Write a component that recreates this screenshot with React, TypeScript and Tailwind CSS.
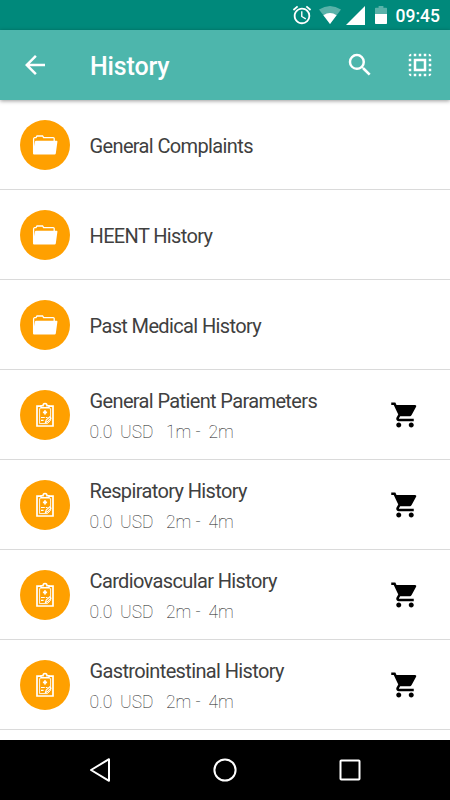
import type { ReactNode } from "react";
import clsx from "clsx";

type Item = {
  title: string;
  price?: string;
  from?: string;
  to?: string;
};

const ITEMS: Item[] = [
  { title: "General Complaints" },
  { title: "HEENT History" },
  { title: "Past Medical History" },
  { title: "General Patient Parameters", price: "0.0", from: "1m", to: "2m" },
  { title: "Respiratory History", price: "0.0", from: "2m", to: "4m" },
  { title: "Cardiovascular History", price: "0.0", from: "2m", to: "4m" },
  { title: "Gastrointestinal History", price: "0.0", from: "2m", to: "4m" },
];

function MdIcon({ d, className = "size-[30px]" }: { d: string; className?: string }) {
  return (
    <svg viewBox="0 0 24 24" className={clsx("shrink-0", className)} fill="currentColor">
      <path d={d} />
    </svg>
  );
}

const ALARM =
  "M22 5.72l-4.6-3.86-1.29 1.53 4.6 3.86L22 5.72zM7.88 3.39L6.6 1.86 2 5.71l1.29 1.53 4.59-3.85zM12.5 8H11v6l4.75 2.85.75-1.23-4-2.37V8zM12 4c-4.97 0-9 4.03-9 9s4.02 9 9 9a9 9 0 0 0 0-18zm0 16c-3.87 0-7-3.13-7-7s3.13-7 7-7 7 3.13 7 7-3.13 7-7 7z";
const BACK = "M20 11H7.83l5.59-5.59L12 4l-8 8 8 8 1.41-1.41L7.83 13H20v-2z";
const SEARCH =
  "M15.5 14h-.79l-.28-.27A6.471 6.471 0 0 0 16 9.5 6.5 6.5 0 1 0 9.5 16c1.61 0 3.09-.59 4.23-1.57l.27.28v.79l5 4.99L20.49 19l-4.99-5zm-6 0C7.01 14 5 11.99 5 9.5S7.01 5 9.5 5 14 7.01 14 9.5 11.99 14 9.5 14z";
const SELECT_ALL =
  "M3 5h2V3c-1.1 0-2 .9-2 2zm0 8h2v-2H3v2zm4 8h2v-2H7v2zM3 9h2V7H3v2zm10-6h-2v2h2V3zm6 0v2h2c0-1.1-.9-2-2-2zM5 21v-2H3c0 1.1.9 2 2 2zm-2-4h2v-2H3v2zM9 3H7v2h2V3zm2 18h2v-2h-2v2zm8-8h2v-2h-2v2zm0 8c1.1 0 2-.9 2-2h-2v2zm0-12h2V7h-2v2zm0 8h2v-2h-2v2zm-4 4h2v-2h-2v2zm0-16h2V3h-2v2zM7 17h10V7H7v10zm2-8h6v6H9V9z";
const CART =
  "M7 18c-1.1 0-1.99.9-1.99 2S5.9 22 7 22s2-.9 2-2-.9-2-2-2zM1 2v2h2l3.6 7.59-1.35 2.45c-.16.28-.25.61-.25.96 0 1.1.9 2 2 2h12v-2H7.42c-.14 0-.25-.11-.25-.25l.03-.12.9-1.63h7.45c.75 0 1.41-.41 1.75-1.03l3.58-6.49A1.003 1.003 0 0 0 20 4H5.21l-.94-2H1zm16 16c-1.1 0-1.99.9-1.99 2s.89 2 1.99 2 2-.9 2-2-.9-2-2-2z";

function StatusBar() {
  return (
    <div className="flex h-[30px] items-center bg-[#00897b] pl-[291px] text-white">
      <MdIcon d={ALARM} className="size-[22px]" />
      <svg viewBox="0 0 22 18" className="ml-[6px] h-[18px] w-[22px]" fill="currentColor">
        <path d="M0 3.6Q11-3.6 22 3.6L11 18z" opacity=".35" />
        <path d="M4.4 9.2Q11 4.6 17.6 9.2L11 18z" />
      </svg>
      <svg viewBox="0 0 19 19" className="ml-[5px] size-[19px]" fill="currentColor">
        <path d="M0 19L19 0v19z" />
      </svg>
      <svg viewBox="0 0 12 18" className="ml-[10px] h-[18px] w-3" fill="currentColor">
        <path d="M0 8V2.6Q0 1.8.8 1.8H3.6V0H8.4V1.8H11.2Q12 1.8 12 2.6V8z" opacity=".35" />
        <path d="M0 8H12V17.2Q12 18 11.2 18H.8Q0 18 0 17.2z" />
      </svg>
      <span className="ml-[8.5px] pt-[3px] text-[17.5px] leading-none font-medium">09:45</span>
    </div>
  );
}

function AppBar() {
  return (
    <header className="relative flex h-[70px] items-center bg-[#4db6ac] pr-[15px] pl-5 text-white shadow-[0_1px_4px_rgba(0,0,0,0.4)]">
      <MdIcon d={BACK} />
      <h1 className="ml-10 grow pt-[3px] text-[25px] leading-none font-medium tracking-[-0.15px]">History</h1>
      <MdIcon d={SEARCH} />
      <MdIcon d={SELECT_ALL} className="ml-[30px] size-[30px]" />
    </header>
  );
}

function FolderIcon() {
  return (
    <svg viewBox="0 0 26 20" className="h-5 w-[26px]">
      <path
        d="M1.6 17V4Q1.6 2.8 2.6 2.6H4L5 1H10.6L11.6 2.6H21.2Q22.2 2.6 22.2 3.6V6"
        fill="none"
        stroke="white"
        strokeWidth="1.3"
      />
      <path
        d="M4 5.8H24.6Q25.6 5.8 25.4 6.8L23.8 18.4Q23.6 19.5 22.6 19.5H2Q1 19.5 1 18.5V16L3 6.6Q3.2 5.8 4 5.8z"
        fill="white"
      />
    </svg>
  );
}

function ClipboardIcon() {
  return (
    <svg viewBox="0 0 18 25" className="h-[25px] w-[18px]" fill="none" stroke="white">
      <path d="M5 4.2H1V24H17V4.2H13" strokeWidth="1.7" />
      <path d="M4.5 6.6H3.6V21.6H11.4L14.6 18.4V6.6H13.5" strokeWidth=".9" />
      <path d="M5 5.8V3.8H7Q7 1.4 9 1.4T11 3.8H13V5.8z" strokeWidth="1.5" />
      <path d="M9 8.3V12.5M6.9 10.4H11.1" strokeWidth="1.8" />
      <path d="M5 15.5H8.8M5 18.3H7.6M9.8 15.5H11.5" strokeWidth="1.2" />
      <path d="M9.4 20.6L10.2 18L13.8 14.8L15 16.2L11.4 19.8z" strokeWidth="1.1" />
    </svg>
  );
}

function Avatar({ children }: { children: ReactNode }) {
  return (
    <div className="flex size-[50px] shrink-0 items-center justify-center rounded-full bg-[#ffa000]">{children}</div>
  );
}

function Row({ item }: { item: Item }) {
  return (
    <li className="flex h-[90px] items-center border-b border-[#dadada] pr-[30px] pl-5">
      <Avatar>{item.price ? <ClipboardIcon /> : <FolderIcon />}</Avatar>
      <div className={clsx("ml-[19.5px] grow", item.price ? "pt-1" : "pt-[2px]")}>
        <div className="text-[20px] leading-6 tracking-[-0.63px] text-[#404040]">{item.title}</div>
        {item.price && (
          <div className="mt-[7px] flex text-[17.5px] leading-6 font-thin text-[#222]">
            <span className="w-[30.5px]">{item.price}</span>
            <span className="w-[46px]">USD</span>
            <span className="w-[42.5px]">{item.from} -</span>
            <span>{item.to}</span>
          </div>
        )}
      </div>
      {item.price && <MdIcon d={CART} className="size-[30px] text-black" />}
    </li>
  );
}

function NavBar() {
  return (
    <nav className="flex h-[60px] shrink-0 items-center justify-between bg-black px-[85px] text-white">
      <svg viewBox="0 0 30 30" className="size-[30px]" fill="none" stroke="currentColor" strokeWidth="2" strokeLinejoin="round">
        <path d="M24 4.2V25.8L6 15z" />
      </svg>
      <svg viewBox="0 0 30 30" className="size-[30px]" fill="none" stroke="currentColor" strokeWidth="2">
        <circle cx="15" cy="15" r="10.6" />
      </svg>
      <svg viewBox="0 0 30 30" className="size-[30px]" fill="none" stroke="currentColor" strokeWidth="2">
        <rect x="5.5" y="5.5" width="19" height="19" rx="0.8" />
      </svg>
    </nav>
  );
}

export default function App() {
  return (
    <div className="flex h-[800px] w-[450px] flex-col overflow-hidden bg-white font-[Roboto,sans-serif]">
      <StatusBar />
      <AppBar />
      <ul className="min-h-0 grow overflow-hidden">
        {ITEMS.map((item) => (
          <Row key={item.title} item={item} />
        ))}
      </ul>
      <NavBar />
    </div>
  );
}
